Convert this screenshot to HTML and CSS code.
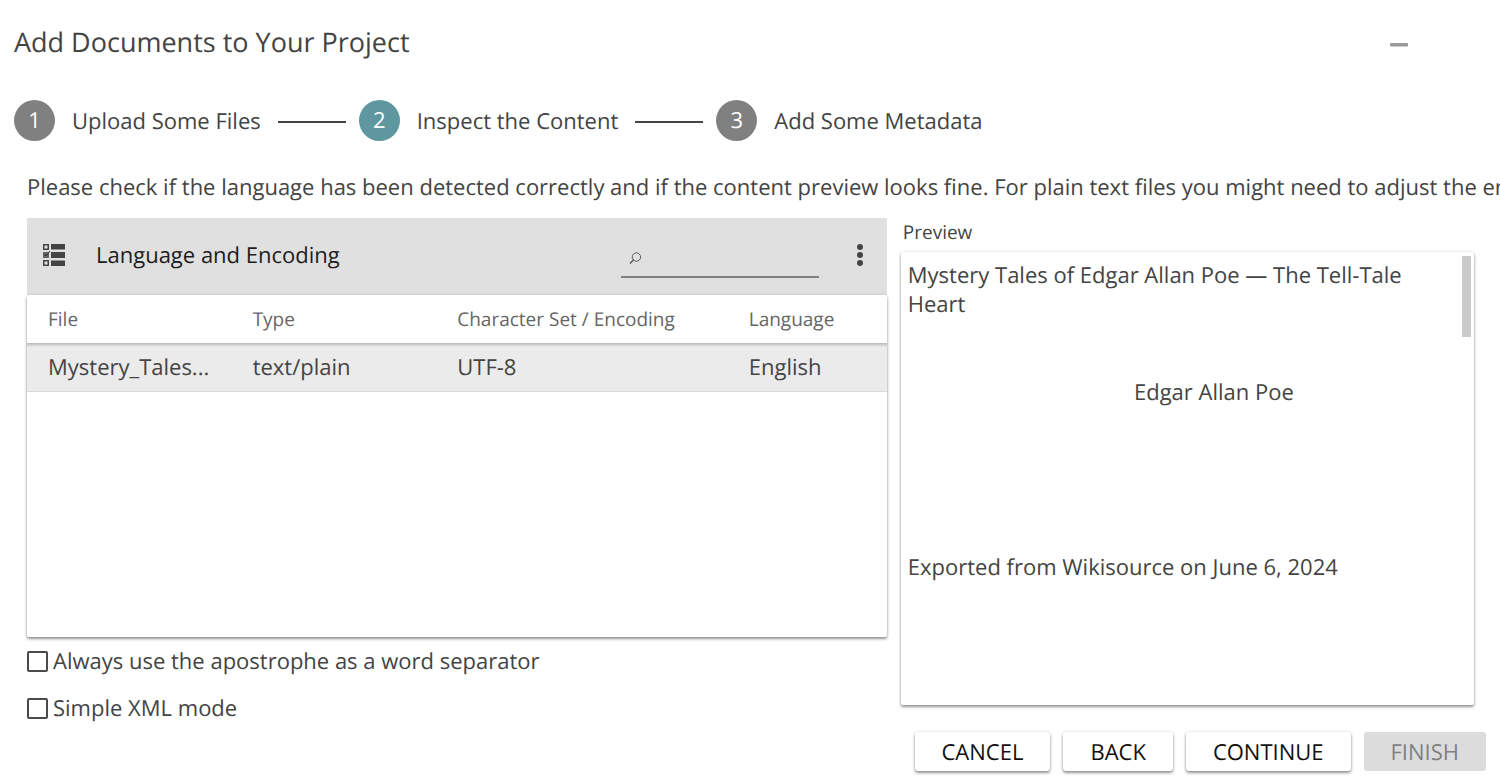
FILE: index.html
```html
<!DOCTYPE html>
<html lang="en">
<head>
<meta charset="utf-8">
<title>Add Documents to Your Project</title>
<link rel="stylesheet" href="styles.css">
</head>
<body>
<main class="dialog">
  <header class="dialog-header">
    <h1 class="dialog-title">Add Documents to Your Project</h1>
    <button class="icon-button minimize" type="button" aria-label="Minimize">
      <svg width="18" height="4" viewBox="0 0 18 4"><rect width="18" height="3.5" rx="1" fill="#999"/></svg>
    </button>
  </header>

  <ol class="steps">
    <li class="step"><span class="step-number">1</span><span class="step-label">Upload Some Files</span></li>
    <li class="step"><span class="step-number step-number-active">2</span><span class="step-label">Inspect the Content</span></li>
    <li class="step"><span class="step-number">3</span><span class="step-label">Add Some Metadata</span></li>
  </ol>

  <p class="intro">Please check if the language has been detected correctly and if the content preview looks fine. For plain text files you might need to adjust the enc</p>

  <div class="content">
    <section class="files">
      <div class="toolbar">
        <button class="icon-button" type="button" aria-label="Select items">
          <svg width="24" height="24" viewBox="0 0 24 24" fill="#444">
            <path d="M9 1h14v5.500H9zM9 9h14v6H9zM9 17.500h14V23H9z"/>
            <path fill-rule="evenodd" d="M1 1h6v6H1zM2.500 2.500v3h3v-3zM1 17h6v6H1zM2.500 18.500v3h3v-3z"/>
            <path d="M1 9h6v6H1z" fill="#666"/>
            <path d="M2 11l2 2 4-5" fill="none" stroke="#333"/>
          </svg>
        </button>
        <h2 class="toolbar-title">Language and Encoding</h2>
        <label class="search">
          <svg width="14" height="14" viewBox="0 0 14 14" fill="none" stroke="#555"><circle cx="8" cy="6" r="4.500"/><path d="M5 9l-4 4" stroke-width="1.500"/></svg>
          <input class="search-input" type="text" aria-label="Search files">
        </label>
        <button class="icon-button" type="button" aria-label="More options">
          <svg width="6" height="24" viewBox="0 0 6 24" fill="#444"><circle cx="3" cy="4" r="3"/><circle cx="3" cy="12" r="3"/><circle cx="3" cy="20" r="3"/></svg>
        </button>
      </div>
      <div class="card">
        <table class="file-table">
          <colgroup><col class="col-file"><col class="col-type"><col class="col-encoding"><col></colgroup>
          <thead><tr><th>File</th><th>Type</th><th>Character Set / Encoding</th><th>Language</th></tr></thead>
          <tbody><tr><td>Mystery_Tales...</td><td>text/plain</td><td>UTF-8</td><td>English</td></tr></tbody>
        </table>
      </div>
      <label class="option"><input class="checkbox" type="checkbox">Always use the apostrophe as a word separator</label>
      <label class="option"><input class="checkbox" type="checkbox">Simple XML mode</label>
    </section>

    <section class="preview">
      <h2 class="preview-label">Preview</h2>
      <div class="preview-box">
        <div class="preview-text">
          <p class="preview-heading">Mystery Tales of Edgar Allan Poe — The Tell-Tale Heart</p>
          <p class="preview-author">Edgar Allan Poe</p>
          <p class="preview-source">Exported from Wikisource on June 6, 2024</p>
        </div>
        <div class="scroll-thumb"></div>
      </div>
    </section>
  </div>

  <footer class="actions">
    <button class="button" type="button">CANCEL</button>
    <button class="button" type="button">BACK</button>
    <button class="button" type="button">CONTINUE</button>
    <button class="button" type="button" disabled>FINISH</button>
  </footer>
</main>
</body>
</html>
```
FILE: styles.css
```css
* {
  box-sizing: border-box;
}

body,
h1,
h2,
p,
ol {
  margin: 0;
  padding: 0;
  font-weight: 400;
}

body {
  background: #fff;
  color: #444;
  font-family: "Open Sans", sans-serif;
  font-size: 22px;
  line-height: 30px;
  text-rendering: geometricPrecision;
}

button,
input {
  font: inherit;
  text-rendering: inherit;
}

.dialog {
  display: flex;
  flex-direction: column;
  min-height: 100vh;
  padding: 24px 14px 11px;
}

.dialog-header {
  display: flex;
  justify-content: space-between;
  align-items: center;
  margin-bottom: 40px;
  padding-right: 78px;
}

.dialog-title {
  font-size: 27px;
  line-height: 36px;
}

.icon-button {
  display: flex;
  padding: 0;
  border: 0;
  background: none;
}

.minimize {
  margin-top: 6px;
}

.steps {
  display: flex;
  list-style: none;
}

.step {
  display: flex;
  align-items: center;
}

.step + .step::before {
  content: "";
  width: 68px;
  height: 2px;
  margin: 2px 13px 0 17px;
  background: #444;
}

.step-number {
  width: 41px;
  height: 41px;
  margin-right: 17px;
  border-radius: 50%;
  background: #808080;
  color: #fff;
  line-height: 41px;
  text-align: center;
}

.step-number-active {
  background: #5f979f;
}

.intro {
  margin: 31px -14px 16px 13px;
  overflow: hidden;
  white-space: nowrap;
}

.content {
  display: grid;
  grid-template-columns: 3fr 2fr;
  flex: 1;
  gap: 14px;
  padding: 0 12px 0 13px;
}

.files,
.preview {
  display: flex;
  flex-direction: column;
}

.card {
  flex: 1;
  margin-bottom: 9px;
  border-radius: 2px;
  box-shadow: 0 2px 3px rgba(0, 0, 0, 0.4), 0 0 3px rgba(0, 0, 0, 0.14);
}

.toolbar {
  display: flex;
  align-items: center;
  height: 77px;
  padding: 0 24px 4px 15px;
  background: #e0e0e0;
}

.toolbar-title {
  flex: 1;
  margin-left: 30px;
  color: #1d1d1d;
  font-size: 22px;
}

.search {
  display: flex;
  align-items: center;
  width: 198px;
  height: 38px;
  margin: 8px 38px 0 0;
  padding-left: 8px;
  border-bottom: 2px solid #808080;
}

.search-input {
  width: 100%;
  min-width: 0;
  border: 0;
  background: none;
  outline: 0;
}

.file-table {
  width: 100%;
  table-layout: fixed;
  border-collapse: collapse;
}

.col-file,
.col-type {
  width: 23.8%;
}

.col-encoding {
  width: 33.9%;
}

.file-table th,
.file-table td {
  height: 48px;
  padding: 0 0 0 21px;
  font-weight: 400;
  text-align: left;
  white-space: nowrap;
}

.file-table th {
  color: #666;
  font-size: 19px;
}

.file-table tbody {
  background: linear-gradient(#b8b8b8, #ebebeb 4px);
}

.file-table td {
  border-bottom: 1px solid #d8d8d8;
}

.option {
  display: flex;
  align-items: center;
  height: 30px;
}

.option + .option {
  margin-top: 17px;
}

.checkbox {
  appearance: none;
  width: 21px;
  height: 21px;
  margin: 0 5px 0 0;
  border: 2px solid #4a4a4a;
  border-radius: 2px;
}

.checkbox:checked {
  background: #555;
}

.preview-label {
  padding-left: 2px;
  font-size: 19px;
  line-height: 28px;
}

.preview-box {
  display: flex;
  flex: 1;
  align-items: flex-start;
  margin: 6px 0 18px;
  padding: 4px 3px 4px 7px;
  border-radius: 2px;
  box-shadow: 0 2px 3px rgba(0, 0, 0, 0.4), 0 0 3px rgba(0, 0, 0, 0.14);
}

.preview-text {
  flex: 1;
  padding-top: 5px;
  line-height: 29px;
}

.preview-heading {
  padding-right: 20px;
}

.preview-author {
  margin: 59px 0 146px;
  padding-left: 58px;
  text-align: center;
}

.scroll-thumb {
  width: 9px;
  height: 81px;
  background: #cacaca;
}

.actions {
  display: flex;
  justify-content: flex-end;
  gap: 13px;
  margin-top: 9px;
}

.button {
  height: 39px;
  padding: 0 27px;
  border: 0;
  border-radius: 3px;
  background: #fff;
  box-shadow: 0 2px 3px rgba(0, 0, 0, 0.4), 0 0 3px rgba(0, 0, 0, 0.14);
  color: #111;
}

.button:disabled {
  background: #dcdcdc;
  box-shadow: none;
  color: #808080;
}
```
